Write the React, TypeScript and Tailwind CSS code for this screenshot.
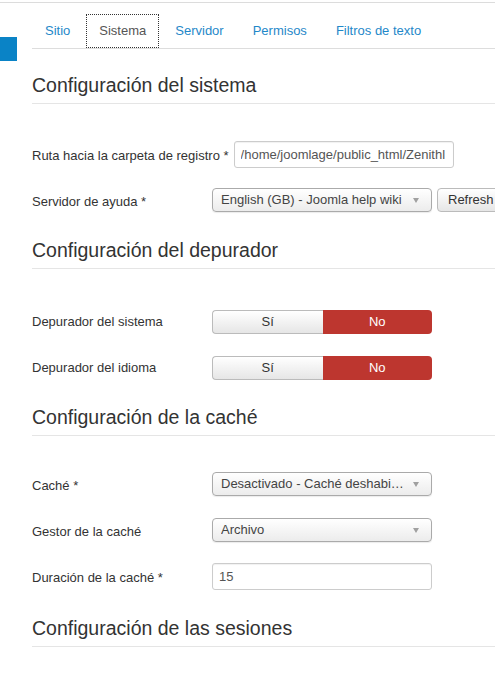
const tabs = ['Sitio', 'Sistema', 'Servidor', 'Permisos', 'Filtros de texto'];

const Heading = ({ title, className }: { title: string; className: string }) => (
  <h3 className={`${className} border-b border-[#e5e5e5] pb-[6px] text-[19.5px] leading-6 font-normal text-[#333]`}>{title}</h3>
);

const Row = ({ label, children, up }: { label: string; children: React.ReactNode; up?: boolean }) => (
  <div className="mb-[18px] flex h-[28px] items-center">
    <label className={`mr-[5px] min-w-[175px] shrink-0 whitespace-nowrap ${up ? 'pb-[1px]' : 'pt-[4px]'}`}>{label}</label>
    {children}
  </div>
);

const Select = ({ value }: { value: string }) => (
  <div className="flex h-[24px] w-[220px] shrink-0 items-center rounded-[4px] border border-[#aaa] bg-linear-to-b from-white to-[#ececec] pr-[12px] pl-[8px] text-[#444] shadow-[0_1px_1px_rgba(0,0,0,0.08)]">
    <span className="flex-1 truncate whitespace-nowrap">{value}</span>
    <span className="ml-2 h-0 w-0 border-x-[3.5px] border-t-[5px] border-x-transparent border-t-[#a0a0a0]" />
  </div>
);

const TextInput = ({ value }: { value: string }) => (
  <input
    readOnly
    value={value}
    className="h-[27px] w-[220px] shrink-0 rounded-[3px] border border-[#ccc] px-[6px] text-[13px] text-[#555] shadow-[inset_0_1px_1px_rgba(0,0,0,0.06)] outline-none"
  />
);

const Toggle = () => (
  <div className="flex h-[24px] w-[220px] shrink-0">
    <span className="flex flex-1 items-center justify-center rounded-l-[4px] border border-r-0 border-[#bbb] bg-linear-to-b from-white to-[#e6e6e6] text-[#333]">Sí</span>
    <span className="flex flex-1 items-center justify-center rounded-r-[4px] bg-[#bd362f] text-white">No</span>
  </div>
);

export default function App() {
  return (
    <div className="min-h-[674px] w-full overflow-hidden bg-white font-['Liberation_Sans',Arial,sans-serif] text-[13px] text-[#333]">
      <div className="mt-[2px] h-px bg-[#dcdcdc]" />
      <div className="flex">
        <div className="w-8 shrink-0">
          <div className="mt-[34px] h-[24px] w-[17px] bg-[#0a83c6]" />
        </div>
        <div className="flex min-w-0 flex-1 flex-col pt-[11px]">
          <ul className="flex border-b border-[#ddd]">
            {tabs.map(t => (
              <li
                key={t}
                className={`mr-[3px] flex h-[34px] items-center border px-3 ${
                  t === 'Sistema' ? 'border-dotted border-[#333] text-[#555]' : 'border-transparent text-[#1f88c9]'
                }`}
              >
                {t}
              </li>
            ))}
          </ul>

          <Heading title="Configuración del sistema" className="mt-[24px]" />
          <div className="flex flex-col pt-[36px]">
            <Row label="Ruta hacia la carpeta de registro *">
              <TextInput value="/home/joomlage/public_html/Zenithl" />
            </Row>
            <Row label="Servidor de ayuda *">
              <Select value="English (GB) - Joomla help wiki" />
              <button className="ml-[5px] h-[24px] shrink-0 rounded-[4px] border border-[#bbb] bg-linear-to-b from-white to-[#e6e6e6] px-[10px] whitespace-nowrap text-[#333]">
                Refresh
              </button>
            </Row>
          </div>

          <Heading title="Configuración del depurador" className="mt-[6px]" />
          <div className="flex flex-col pt-[39px]">
            <Row label="Depurador del sistema" up>
              <Toggle />
            </Row>
            <Row label="Depurador del idioma" up>
              <Toggle />
            </Row>
          </div>

          <Heading title="Configuración de la caché" className="mt-[5px]" />
          <div className="flex flex-col pt-[34px]">
            <Row label="Caché *">
              <Select value="Desactivado - Caché deshabi…" />
            </Row>
            <Row label="Gestor de la caché">
              <Select value="Archivo" />
            </Row>
            <Row label="Duración de la caché *">
              <TextInput value="15" />
            </Row>
          </div>

          <Heading title="Configuración de las sesiones" className="mt-[8px]" />
        </div>
      </div>
    </div>
  );
}
